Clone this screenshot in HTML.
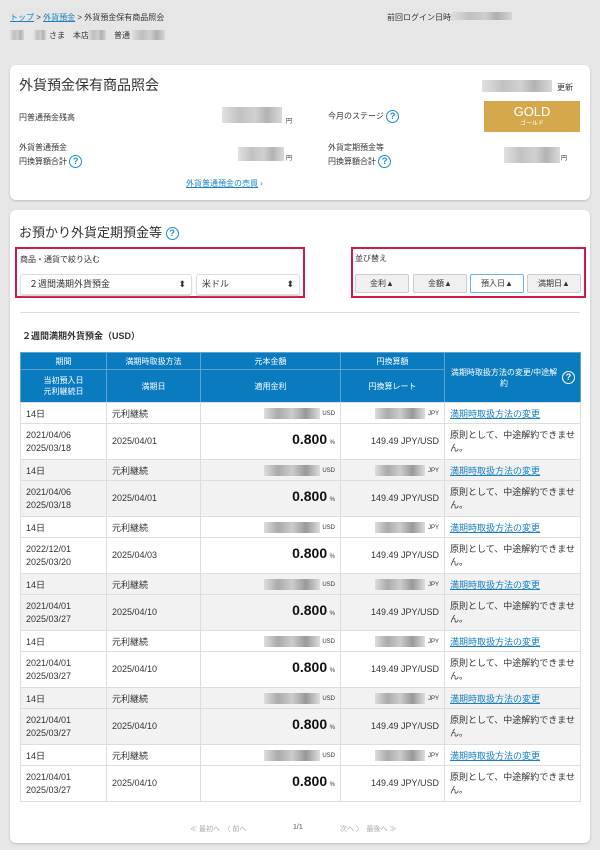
<!DOCTYPE html>
<html><head><meta charset="utf-8"><style>
*{box-sizing:border-box;margin:0;padding:0}
body{width:600px;height:850px;background:#e6e6e6;font-family:"Liberation Sans","Noto Sans CJK JP",sans-serif;color:#333;position:relative;overflow:hidden;font-size:9px}
.a{position:absolute}
.blur{position:absolute;background:linear-gradient(90deg,#ddd,#bbb 30%,#ccc 55%,#aaa 75%,#d5d5d5);opacity:.9}
a{color:#1a7fc1;text-decoration:underline}
.card{position:absolute;left:10px;width:580px;background:#fff;border-radius:6px;box-shadow:0 1px 2px #bbb}
.q{display:inline-block;width:13px;height:13px;border:1.5px solid #1a8ad0;border-radius:50%;color:#1a8ad0;font-size:9px;font-weight:bold;text-align:center;line-height:10px;vertical-align:middle}
table{position:absolute;left:20px;top:352px;width:560px;border-collapse:collapse;table-layout:fixed}
td,th{border:1px solid #ddd;font-size:9px;font-weight:normal;padding:0 5px}
th{background:#0b7bc0;color:#fff;border-color:#5aa4d4;text-align:center;line-height:11px;font-size:8px}
tr.r1 td{height:21px}
tr.r2 td{height:36px;line-height:13px}
.g td{background:#f2f2f2}
.amt{text-align:right;position:relative}
.big{font-size:14px;font-weight:bold;color:#111}
.sel{position:absolute;top:274px;height:21px;border:1px solid #ddd;border-radius:3px;font-size:9px;line-height:19px;padding-left:8px;box-shadow:0 1px 1px #ccc}
.btn{position:absolute;top:274px;width:54px;height:19px;border:1px solid #ccc;background:#f0f0f0;border-radius:2px;text-align:center;line-height:17px;font-size:8px}
</style></head><body>
<div class="a" style="left:10px;top:12px;font-size:8px"><a>トップ</a> &gt; <a>外貨預金</a> &gt; 外貨預金保有商品照会</div>
<div class="a" style="left:387px;top:12px;font-size:8px">前回ログイン日時:</div>
<div class="blur" style="left:452px;top:12px;width:60px;height:8px"></div>
<div class="blur" style="left:10px;top:30px;width:14px;height:10px"></div>
<div class="blur" style="left:34px;top:30px;width:12px;height:10px"></div>
<div class="a" style="left:49px;top:30px;font-size:8px">さま　本店</div>
<div class="blur" style="left:88px;top:30px;width:18px;height:10px"></div>
<div class="a" style="left:114px;top:30px;font-size:8px">普通</div>
<div class="blur" style="left:132px;top:30px;width:33px;height:10px"></div>

<div class="card" style="top:65px;height:135px"></div>
<div class="a" style="left:19px;top:75px;font-size:14px">外貨預金保有商品照会</div>
<div class="blur" style="left:482px;top:80px;width:70px;height:12px"></div>
<div class="a" style="left:557px;top:82px;font-size:8px">更新</div>
<div class="a" style="left:19px;top:112px;font-size:8px">円普通預金残高</div>
<div class="blur" style="left:222px;top:107px;width:60px;height:16px"></div>
<div class="a" style="left:286px;top:116px;font-size:6px">円</div>
<div class="a" style="left:328px;top:110px;font-size:8px">今月のステージ <span class="q">?</span></div>
<div class="a" style="left:484px;top:101px;width:96px;height:31px;background:#d6a84e;color:#fff;text-align:center"><div style="font-size:13px;line-height:16px;margin-top:3px">GOLD</div><div style="font-size:6px;line-height:8px">ゴールド</div></div>
<div class="a" style="left:19px;top:141px;font-size:8px;line-height:14px">外貨普通預金<br>円換算額合計 <span class="q">?</span></div>
<div class="blur" style="left:238px;top:147px;width:46px;height:14px"></div>
<div class="a" style="left:286px;top:153px;font-size:6px">円</div>
<div class="a" style="left:328px;top:141px;font-size:8px;line-height:14px">外貨定期預金等<br>円換算額合計 <span class="q">?</span></div>
<div class="blur" style="left:504px;top:147px;width:56px;height:16px"></div>
<div class="a" style="left:561px;top:153px;font-size:6px">円</div>
<div class="a" style="left:186px;top:178px;font-size:8px"><a>外貨普通預金の売買</a> <span style="color:#1a7fc1">›</span></div>

<div class="card" style="top:210px;height:633px"></div>
<div class="a" style="left:19px;top:222px;font-size:13px">お預かり外貨定期預金等 <span class="q">?</span></div>
<div class="a" style="left:15px;top:247px;width:290px;height:51px;border:2px solid #d21a4a"></div>
<div class="a" style="left:20px;top:254px;font-size:8px">商品・通貨で絞り込む</div>
<div class="sel" style="left:20px;width:172px">２週間満期外貨預金<span style="position:absolute;right:5px">⬍</span></div>
<div class="sel" style="left:196px;width:104px;padding-left:5px">米ドル<span style="position:absolute;right:5px">⬍</span></div>
<div class="a" style="left:351px;top:247px;width:235px;height:51px;border:2px solid #d21a4a"></div>
<div class="a" style="left:355px;top:253px;font-size:8px">並び替え</div>
<div class="btn" style="left:355px">金利▲</div>
<div class="btn" style="left:413px">金額▲</div>
<div class="btn" style="left:470px;background:#fff;border-color:#6ab6e0">預入日▲</div>
<div class="btn" style="left:527px">満期日▲</div>
<div class="a" style="left:20px;top:312px;width:560px;height:1px;background:#ddd"></div>
<div class="a" style="left:22px;top:329px;font-size:9px;font-weight:bold">２週間満期外貨預金（USD）</div>

<table>
<colgroup><col style="width:86px"><col style="width:94px"><col style="width:140px"><col style="width:104px"><col style="width:136px"></colgroup>
<tr><th style="height:17px">期間</th><th>満期時取扱方法</th><th>元本金額</th><th>円換算額</th><th rowspan="2" style="position:relative;padding-right:22px;text-align:center">満期時取扱方法の変更/中途解約<span class="q" style="position:absolute;right:5px;top:18px;border-color:#fff;color:#fff">?</span></th></tr>
<tr><th style="height:33px">当初預入日<br>元利継続日</th><th>満期日</th><th>適用金利</th><th>円換算レート</th></tr>
</table>
<table style="top:402px">
<colgroup><col style="width:86px"><col style="width:94px"><col style="width:140px"><col style="width:104px"><col style="width:136px"></colgroup>
<tbody id="tb">
<tr class="r1"><td>14日</td><td>元利継続</td><td class="amt"><span style="display:inline-block;width:56px;height:11px;background:linear-gradient(90deg,#ddd,#aaa,#ccc,#999,#ddd);vertical-align:middle"></span> <span style="font-size:6px">USD</span></td><td class="amt"><span style="display:inline-block;width:50px;height:11px;background:linear-gradient(90deg,#ddd,#aaa,#ccc,#999,#ddd);vertical-align:middle"></span> <span style="font-size:6px">JPY</span></td><td><a>満期時取扱方法の変更</a></td></tr>
<tr class="r2"><td>2021/04/06<br>2025/03/18</td><td>2025/04/01</td><td class="amt"><span class="big">0.800</span> <span style="font-size:6px">%</span></td><td class="amt">149.49 JPY/USD</td><td>原則として、中途解約できませ<br>ん。</td></tr>
</tbody></table>
<script>
var d=[["2021/04/06","2025/03/18","2025/04/01"],["2022/12/01","2025/03/20","2025/04/03"],["2021/04/01","2025/03/27","2025/04/10"],["2021/04/01","2025/03/27","2025/04/10"],["2021/04/01","2025/03/27","2025/04/10"],["2021/04/01","2025/03/27","2025/04/10"]];
var tb=document.getElementById('tb'),h=tb.innerHTML,o=h;
d.forEach(function(x,i){var s=h.replace('2021/04/06<br>2025/03/18','<>').replace('2025/04/01',x[2]).replace('<>',x[0]+'<br>'+x[1]);
if(i%2==0)s=s.replace(/class="r1"/,'class="r1 g"').replace(/class="r2"/,'class="r2 g"');o+=s;});
tb.innerHTML=o;
</script>
<div class="a" style="left:0;top:824px;width:600px;font-size:7px;color:#aaa"><span class="a" style="left:190px">≪ 最初へ　〈 前へ</span><span class="a" style="left:293px;color:#555">1/1</span><span class="a" style="left:340px">次へ 〉　最後へ ≫</span></div>
</body></html>
